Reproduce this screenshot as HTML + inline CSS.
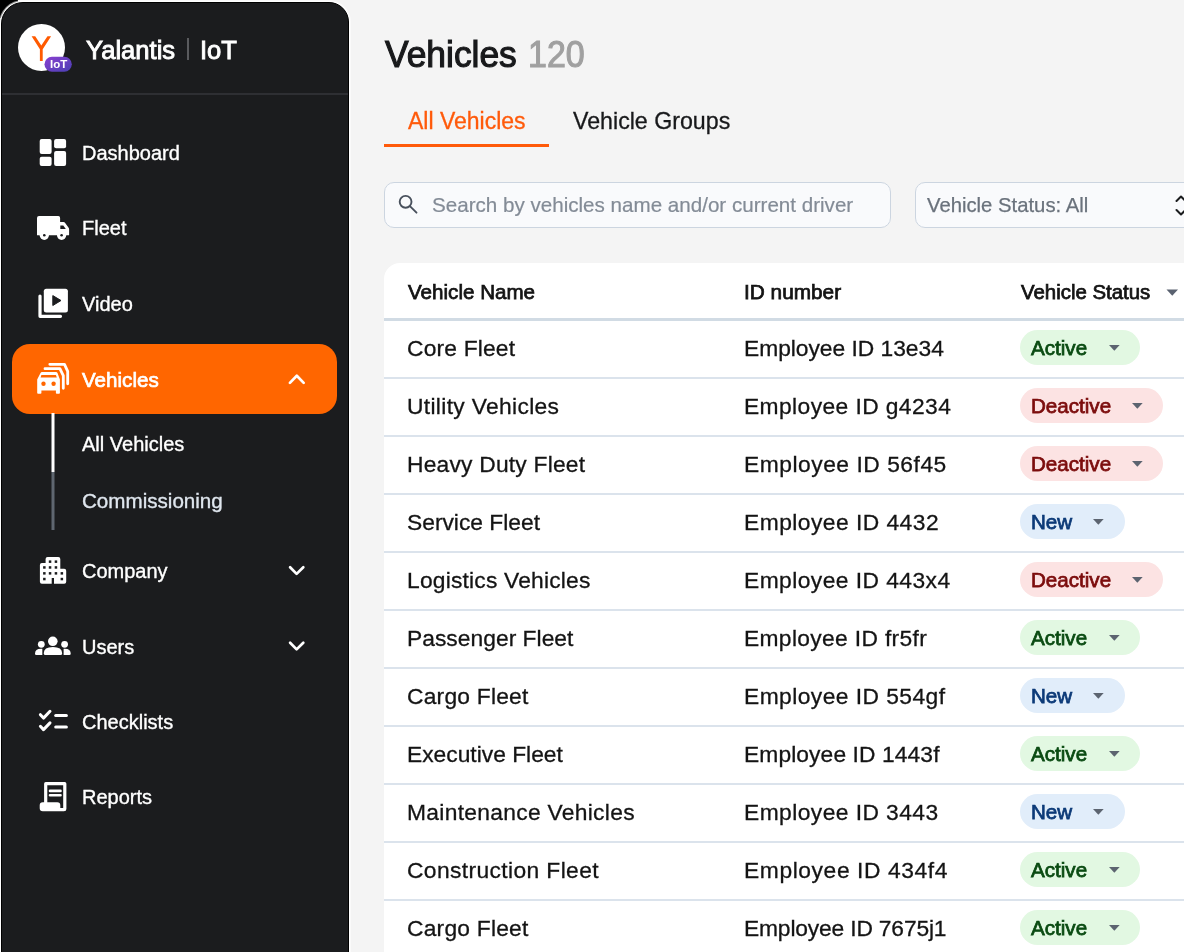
<!DOCTYPE html>
<html><head><meta charset="utf-8">
<style>
*{margin:0;padding:0;box-sizing:border-box}
html,body{width:1184px;height:952px;overflow:hidden;background:#f4f4f4;font-family:"Liberation Sans",sans-serif}
.a{position:absolute;white-space:nowrap;will-change:transform}
#corner{position:absolute;left:0;top:0;width:18px;height:18px;background:#000}
#edge{position:absolute;left:0;top:0;width:2px;height:952px;background:#c4c4c4}
#side{position:absolute;left:1px;top:2px;width:348px;height:980px;background:#1b1c1e;border-radius:22px 20px 0 0;box-shadow:0 0 0 1px #fff,0 0 0 2px rgba(255,255,255,0.55);border:1px solid #000}
.nav{font-size:20px;line-height:20px;color:#fff;-webkit-text-stroke:0.35px #fff}
#pill{position:absolute;left:12px;top:344px;width:325px;height:70px;background:#ff6600;border-radius:18px}
#card{position:absolute;left:384px;top:263px;width:900px;height:800px;background:#fff;border-radius:16px 0 0 0}
.hd{font-size:20.6px;line-height:20px;font-weight:400;color:#141414;-webkit-text-stroke:0.75px #141414}
.td{font-size:22.8px;line-height:22.8px;color:#141414;-webkit-text-stroke:0.3px #141414}
.rl{position:absolute;left:384px;width:800px;height:2px;background:#dbe3ec}
.pl{position:absolute;height:34.5px;border-radius:18px}
.pt{font-size:20.6px;line-height:19.5px;font-weight:400}
.act{background:#e2f8e2}
.act .pt{color:#0a4b12;-webkit-text-stroke:0.75px #0a4b12}
.dea{background:#fce3e3}
.dea .pt{color:#7c0d0d;-webkit-text-stroke:0.75px #7c0d0d}
.new{background:#e1edfa}
.new .pt{color:#0c3a78;-webkit-text-stroke:0.75px #0c3a78}
</style></head><body>
<div id="edge"></div>
<div id="corner"></div>
<div id="side"></div>

<div id="pill"></div>
<!-- logo -->
<div class="a" style="left:17.8px;top:24.4px;width:47px;height:47px;border-radius:50%;background:#fff"></div>
<svg class="a" style="left:0;top:0" width="349" height="952" viewBox="0 0 349 952">
  <path d="M31.6 36.2 H35.2 L41.3 45.6 L47.5 36.2 H51.1 L42.7 49.3 V60.9 H39.9 V49.3 Z" fill="#ff5a00"/>
  <defs><linearGradient id="g1" x1="0" x2="1" y1="0" y2="1"><stop offset="0" stop-color="#8a3fd0"/><stop offset="1" stop-color="#4a40b4"/></linearGradient></defs>
  <rect x="44.5" y="56.8" width="27.3" height="14.9" rx="7.45" fill="url(#g1)"/>
  <!-- dashboard -->
  <g fill="#fff">
    <rect x="39.7" y="139" width="11.9" height="15" rx="2"/>
    <rect x="39.7" y="156.7" width="11.9" height="9.2" rx="2"/>
    <rect x="54.1" y="139" width="12" height="9.3" rx="2"/>
    <rect x="54.1" y="151" width="12" height="14.9" rx="2"/>
  </g>
  <!-- truck -->
  <g fill="#fff">
    <path d="M39 216 H58.3 Q60.1 216 60.1 217.8 V221.9 H63.5 Q64.3 221.9 64.8 222.6 L68.6 227.8 Q69.1 228.5 69.1 229.3 V235.3 H37 V218 Q37 216 39 216 Z"/>
    <circle cx="44.3" cy="235.3" r="4.6"/>
    <circle cx="61.6" cy="235.3" r="4.6"/>
  </g>
  <g fill="#1b1c1e">
    <path d="M60.3 225.4 H63.3 L65.8 229 H60.3 Z"/>
    <circle cx="44.3" cy="235.3" r="1.3"/>
    <circle cx="61.6" cy="235.3" r="1.3"/>
  </g>
  <!-- video -->
  <rect x="43.8" y="288.7" width="24.1" height="23.7" rx="2.5" fill="#fff"/>
  <path d="M52.8 295.6 V305.5 L61 300.5 Z" fill="#1b1c1e" stroke="#1b1c1e" stroke-width="1" stroke-linejoin="round"/>
  <path d="M40 296 V316.3 H60.5" stroke="#fff" stroke-width="3.2" fill="none" stroke-linecap="round" stroke-linejoin="round"/>
  <!-- vehicles -->
  <g fill="#fff">
    <path d="M42 371.9 H56 Q57 371.9 57.5 373 L59.9 379.4 V393 Q59.9 393.7 59 393.7 H56.8 Q55.9 393.7 55.9 393 V390.4 H41.4 V393 Q41.4 393.7 40.5 393.7 H38.1 Q37.2 393.7 37.2 393 V379.4 L40.5 373 Q41 371.9 42 371.9 Z"/>
  </g>
  <g fill="#ff6600">
    <path d="M41.4 375 H55.9 L56.8 377.6 H40.6 Z"/>
    <circle cx="43.5" cy="383.8" r="2.2"/>
    <circle cx="53.6" cy="383.8" r="2.2"/>
  </g>
  <path d="M45 368.7 H59.9 L63.3 375.6 V388.3" stroke="#fff" stroke-width="2.8" fill="none" stroke-linecap="round" stroke-linejoin="round"/>
  <path d="M49.8 364.3 H64.5 L67.7 371.4 V383.8" stroke="#fff" stroke-width="2.8" fill="none" stroke-linecap="round" stroke-linejoin="round"/>
  <path d="M289.9 382.9 L296.8 375.8 L303.7 382.9" stroke="#fff" stroke-width="2.7" fill="none" stroke-linecap="round" stroke-linejoin="round"/>
  <!-- submenu line -->
  <rect x="51.5" y="413" width="3" height="59" fill="#fff"/>
  <rect x="51.5" y="472" width="3" height="58" fill="#5f6670"/>
  <!-- company -->
  <path d="M47.6 557.1 H58.3 Q60.3 557.1 60.3 559.1 V568.7 H64.2 Q66.2 568.7 66.2 570.7 V581.8 Q66.2 583.8 64.2 583.8 H41.9 Q39.9 583.8 39.9 581.8 V565 Q39.9 563 41.9 563 H45.6 V559.1 Q45.6 557.1 47.6 557.1 Z" fill="#fff"/>
  <g fill="#1b1c1e">
    <rect x="48.8" y="560.4" width="2.5" height="2.5"/><rect x="54.7" y="560.4" width="2.5" height="2.5"/>
    <rect x="43.1" y="566.2" width="2.5" height="2.5"/><rect x="48.8" y="566.2" width="2.5" height="2.5"/><rect x="54.7" y="566.2" width="2.5" height="2.5"/>
    <rect x="43.1" y="572.1" width="2.5" height="2.5"/><rect x="48.8" y="572.1" width="2.5" height="2.5"/><rect x="54.7" y="572.1" width="2.5" height="2.5"/><rect x="60.6" y="572.1" width="2.5" height="2.5"/>
    <rect x="43.1" y="577.8" width="2.5" height="2.5"/><rect x="60.6" y="577.8" width="2.5" height="2.5"/>
    <rect x="51.7" y="578" width="2.3" height="6"/>
  </g>
  <path d="M290.1 567.2 L296.6 573.9 L303.3 567.2" stroke="#fff" stroke-width="2.7" fill="none" stroke-linecap="round" stroke-linejoin="round"/>
  <!-- users -->
  <g fill="#fff">
    <circle cx="52.8" cy="641.3" r="4.8"/>
    <path d="M45.3 655 Q43.8 655 43.8 653.5 V653 Q43.8 647 52.9 647 Q62.1 647 62.1 653 V653.5 Q62.1 655 60.6 655 Z"/>
    <circle cx="41.3" cy="644.3" r="3.4"/>
    <path d="M36.3 655 Q35 655 35 653.7 V653.5 Q35 648.7 41 648.7 H42.3 V655 Z"/>
    <circle cx="64.6" cy="644.3" r="3.4"/>
    <path d="M69.4 655 Q70.7 655 70.7 653.7 V653.5 Q70.7 648.7 64.9 648.7 H63.6 V655 Z"/>
  </g>
  <path d="M290.1 642.7 L296.6 649.4 L303.3 642.7" stroke="#fff" stroke-width="2.7" fill="none" stroke-linecap="round" stroke-linejoin="round"/>
  <!-- checklists -->
  <g stroke="#fff" stroke-width="3" fill="none" stroke-linecap="round" stroke-linejoin="round">
    <path d="M40.4 714.7 L43.5 718.1 L50 711.3"/>
    <path d="M40.4 726.3 L43.5 729.6 L50 722.9"/>
    <path d="M55.7 715.5 H66.4"/>
    <path d="M55.7 727.1 H66.4"/>
  </g>
  <!-- reports -->
  <path d="M45.7 810 V783.7 H64.8 V808" stroke="#fff" stroke-width="3.2" fill="none" stroke-linejoin="round"/>
  <path d="M42.7 802.3 H57.3 Q60.3 802.3 60.3 805.3 V808 H66.4 V809 Q66.4 811.3 64 811.3 H42.7 Q39.7 811.3 39.7 808.3 V805.3 Q39.7 802.3 42.7 802.3 Z" fill="#fff"/>
  <path d="M50 790.9 H60.5 M50 795.3 H60.5" stroke="#fff" stroke-width="2.6" stroke-linecap="round"/>
</svg>
<div class="a" style="left:49.5px;top:58.5px;font-size:11.5px;line-height:11.5px;color:#fff;font-weight:700">IoT</div>

<!-- header text -->
<div class="a" style="left:85.5px;top:37.2px;font-size:25.6px;line-height:26px;color:#fff;-webkit-text-stroke:0.9px #fff">Yalantis</div>
<div class="a" style="left:187px;top:38px;width:1.6px;height:22px;background:#5a5b5e"></div>
<div class="a" style="left:200px;top:37.2px;font-size:25.6px;line-height:26px;color:#fff;-webkit-text-stroke:0.9px #fff">IoT</div>
<div class="a" style="left:2px;top:93px;width:346px;height:1.5px;background:#2e2f33"></div>

<div class="a nav" style="left:82px;top:142.8px">Dashboard</div>
<div class="a nav" style="left:82px;top:218.2px">Fleet</div>
<div class="a nav" style="left:82px;top:294.3px">Video</div>
<div class="a nav" style="left:82px;top:369.8px;font-size:20.6px;-webkit-text-stroke:0.7px #fff">Vehicles</div>
<div class="a nav" style="left:82px;top:433.6px">All Vehicles</div>
<div class="a nav" style="left:82px;top:491.1px;color:#dfe6ee;font-size:20.6px;-webkit-text-stroke:0.35px #dfe6ee">Commissioning</div>
<div class="a nav" style="left:82px;top:560.9px">Company</div>
<div class="a nav" style="left:82px;top:636.6px">Users</div>
<div class="a nav" style="left:82px;top:711.5px">Checklists</div>
<div class="a nav" style="left:82px;top:787.3px">Reports</div>

<!-- main -->
<div class="a" style="left:384.5px;top:37.6px;font-size:35.4px;line-height:34px;color:#18191b;-webkit-text-stroke:1.1px #18191b;transform:scaleY(1.04);transform-origin:0 28.6px">Vehicles</div>
<div class="a" style="left:527.5px;top:38px;font-size:34px;line-height:34px;color:#a0a0a0;-webkit-text-stroke:1px #a0a0a0;transform:scaleY(1.06);transform-origin:0 28.6px">120</div>
<div class="a" style="left:407.5px;top:110px;font-size:23px;line-height:23px;color:#ff5a0a;-webkit-text-stroke:0.3px #ff5a0a">All Vehicles</div>
<div class="a" style="left:384px;top:144px;width:165px;height:3px;background:#ff5a0a"></div>
<div class="a" style="left:572.5px;top:110px;font-size:23.2px;line-height:23px;color:#18191b;-webkit-text-stroke:0.3px #18191b">Vehicle Groups</div>

<div class="a" style="left:384px;top:182px;width:507px;height:45.5px;background:#f9fafc;border:1.5px solid #ccd5e0;border-radius:10px"></div>
<svg class="a" style="left:384px;top:182px" width="40" height="46" viewBox="384 182 40 46">
  <circle cx="405.6" cy="201.8" r="5.9" stroke="#48505c" stroke-width="1.9" fill="none"/>
  <path d="M410.4 206.6 L416.5 212.7" stroke="#48505c" stroke-width="1.9" stroke-linecap="round"/>
</svg>
<div class="a" style="left:432px;top:194.5px;font-size:20.6px;line-height:20.6px;color:#838b96;-webkit-text-stroke:0.2px #838b96">Search by vehicles name and/or current driver</div>

<div class="a" style="left:915px;top:182px;width:400px;height:45.5px;background:#f9fafc;border:1.5px solid #ccd5e0;border-radius:10px"></div>
<div class="a" style="left:927px;top:194.6px;font-size:20.3px;line-height:20.3px;color:#6a727c;-webkit-text-stroke:0.25px #6a727c">Vehicle Status: All</div>
<svg class="a" style="left:1170px;top:190px" width="14" height="30" viewBox="1170 190 14 30">
  <path d="M1176.5 201 L1181 196.5 L1185.5 201 M1176.5 210 L1181 214.5 L1185.5 210" stroke="#1b1c1e" stroke-width="2" fill="none" stroke-linecap="round" stroke-linejoin="round"/>
</svg>

<div id="card"></div>
<div class="a hd" style="left:407.5px;top:282px">Vehicle Name</div>
<div class="a hd" style="left:743.5px;top:282px;font-size:20.8px">ID number</div>
<div class="a hd" style="left:1021px;top:282px;font-size:20.4px">Vehicle Status</div>
<svg class="a" style="left:1160px;top:285px" width="24" height="14" viewBox="1160 285 24 14"><path d="M1166.5 289.5 H1178 L1172.25 295.8 Z" fill="#5a6270"/></svg>
<div class="a" style="left:384px;top:318px;width:800px;height:3px;background:#d1dbe4"></div>
<div class="a td" id="n0" style="left:406.5px;top:336.5px;letter-spacing:0.178px">Core Fleet</div>
<div class="a td" id="i0" style="left:743.5px;top:336.5px;letter-spacing:-0.025px">Employee ID 13e34</div>
<div class="a pl act" style="left:1019.5px;top:329.8px;width:120px"><div class="a pt" style="left:11px;top:8.1px">Active</div><svg class="a" style="left:87.8px;top:13px" width="14" height="9" viewBox="0 0 14 9"><path d="M1 2 H11.7 L6.35 7.7 Z" fill="#5c6470"/></svg></div>
<div class="a rl" style="top:377px"></div>
<div class="a td" id="n1" style="left:406.5px;top:394.5px;letter-spacing:0.333px">Utility Vehicles</div>
<div class="a td" id="i1" style="left:743.5px;top:394.5px;letter-spacing:0.412px">Employee ID g4234</div>
<div class="a pl dea" style="left:1019.5px;top:387.8px;width:143.3px"><div class="a pt" style="left:11px;top:8.1px">Deactive</div><svg class="a" style="left:111.0px;top:13px" width="14" height="9" viewBox="0 0 14 9"><path d="M1 2 H11.7 L6.35 7.7 Z" fill="#5c6470"/></svg></div>
<div class="a rl" style="top:435px"></div>
<div class="a td" id="n2" style="left:406.5px;top:452.5px;letter-spacing:0.213px">Heavy Duty Fleet</div>
<div class="a td" id="i2" style="left:743.5px;top:452.5px;letter-spacing:0.525px">Employee ID 56f45</div>
<div class="a pl dea" style="left:1019.5px;top:445.8px;width:143.3px"><div class="a pt" style="left:11px;top:8.1px">Deactive</div><svg class="a" style="left:111.0px;top:13px" width="14" height="9" viewBox="0 0 14 9"><path d="M1 2 H11.7 L6.35 7.7 Z" fill="#5c6470"/></svg></div>
<div class="a rl" style="top:493px"></div>
<div class="a td" id="n3" style="left:406.5px;top:510.5px;letter-spacing:0.000px">Service Fleet</div>
<div class="a td" id="i3" style="left:743.5px;top:510.5px;letter-spacing:0.467px">Employee ID 4432</div>
<div class="a pl new" style="left:1019.5px;top:503.8px;width:104.6px"><div class="a pt" style="left:11px;top:8.1px">New</div><svg class="a" style="left:71.9px;top:13px" width="14" height="9" viewBox="0 0 14 9"><path d="M1 2 H11.7 L6.35 7.7 Z" fill="#5c6470"/></svg></div>
<div class="a rl" style="top:551px"></div>
<div class="a td" id="n4" style="left:406.5px;top:568.5px;letter-spacing:0.200px">Logistics Vehicles</div>
<div class="a td" id="i4" style="left:743.5px;top:568.5px;letter-spacing:0.450px">Employee ID 443x4</div>
<div class="a pl dea" style="left:1019.5px;top:561.8px;width:143.3px"><div class="a pt" style="left:11px;top:8.1px">Deactive</div><svg class="a" style="left:111.0px;top:13px" width="14" height="9" viewBox="0 0 14 9"><path d="M1 2 H11.7 L6.35 7.7 Z" fill="#5c6470"/></svg></div>
<div class="a rl" style="top:609px"></div>
<div class="a td" id="n5" style="left:406.5px;top:626.5px;letter-spacing:0.029px">Passenger Fleet</div>
<div class="a td" id="i5" style="left:743.5px;top:626.5px;letter-spacing:0.337px">Employee ID fr5fr</div>
<div class="a pl act" style="left:1019.5px;top:619.8px;width:120px"><div class="a pt" style="left:11px;top:8.1px">Active</div><svg class="a" style="left:87.8px;top:13px" width="14" height="9" viewBox="0 0 14 9"><path d="M1 2 H11.7 L6.35 7.7 Z" fill="#5c6470"/></svg></div>
<div class="a rl" style="top:667px"></div>
<div class="a td" id="n6" style="left:406.5px;top:684.5px;letter-spacing:0.220px">Cargo Fleet</div>
<div class="a td" id="i6" style="left:743.5px;top:684.5px;letter-spacing:0.450px">Employee ID 554gf</div>
<div class="a pl new" style="left:1019.5px;top:677.8px;width:104.6px"><div class="a pt" style="left:11px;top:8.1px">New</div><svg class="a" style="left:71.9px;top:13px" width="14" height="9" viewBox="0 0 14 9"><path d="M1 2 H11.7 L6.35 7.7 Z" fill="#5c6470"/></svg></div>
<div class="a rl" style="top:725px"></div>
<div class="a td" id="n7" style="left:406.5px;top:742.5px;letter-spacing:0.000px">Executive Fleet</div>
<div class="a td" id="i7" style="left:743.5px;top:742.5px;letter-spacing:0.100px">Employee ID 1443f</div>
<div class="a pl act" style="left:1019.5px;top:735.8px;width:120px"><div class="a pt" style="left:11px;top:8.1px">Active</div><svg class="a" style="left:87.8px;top:13px" width="14" height="9" viewBox="0 0 14 9"><path d="M1 2 H11.7 L6.35 7.7 Z" fill="#5c6470"/></svg></div>
<div class="a rl" style="top:783px"></div>
<div class="a td" id="n8" style="left:406.5px;top:800.5px;letter-spacing:0.305px">Maintenance Vehicles</div>
<div class="a td" id="i8" style="left:743.5px;top:800.5px;letter-spacing:0.440px">Employee ID 3443</div>
<div class="a pl new" style="left:1019.5px;top:793.8px;width:104.6px"><div class="a pt" style="left:11px;top:8.1px">New</div><svg class="a" style="left:71.9px;top:13px" width="14" height="9" viewBox="0 0 14 9"><path d="M1 2 H11.7 L6.35 7.7 Z" fill="#5c6470"/></svg></div>
<div class="a rl" style="top:841px"></div>
<div class="a td" id="n9" style="left:406.5px;top:858.5px;letter-spacing:0.388px">Construction Fleet</div>
<div class="a td" id="i9" style="left:743.5px;top:858.5px;letter-spacing:0.600px">Employee ID 434f4</div>
<div class="a pl act" style="left:1019.5px;top:851.8px;width:120px"><div class="a pt" style="left:11px;top:8.1px">Active</div><svg class="a" style="left:87.8px;top:13px" width="14" height="9" viewBox="0 0 14 9"><path d="M1 2 H11.7 L6.35 7.7 Z" fill="#5c6470"/></svg></div>
<div class="a rl" style="top:899px"></div>
<div class="a td" id="n10" style="left:406.5px;top:916.5px;letter-spacing:0.220px">Cargo Fleet</div>
<div class="a td" id="i10" style="left:743.5px;top:916.5px;letter-spacing:-0.165px">Employee ID 7675j1</div>
<div class="a pl act" style="left:1019.5px;top:909.8px;width:120px"><div class="a pt" style="left:11px;top:8.1px">Active</div><svg class="a" style="left:87.8px;top:13px" width="14" height="9" viewBox="0 0 14 9"><path d="M1 2 H11.7 L6.35 7.7 Z" fill="#5c6470"/></svg></div>
</body></html>
